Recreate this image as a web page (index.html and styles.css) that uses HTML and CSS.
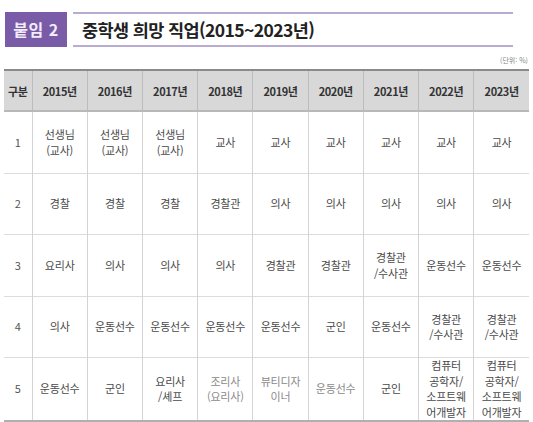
FILE: index.html
```html
<!DOCTYPE html>
<html lang="ko">
<head>
<meta charset="utf-8">
<link rel="stylesheet" href="styles.css">
</head>
<body>
<div class="page">
  <div class="title-row">
    <div class="badge">붙임 2</div>
    <div class="title">중학생 희망 직업(2015~2023년)</div>
  </div>
  <div class="unit">(단위: %)</div>
  <table class="grid">
    <colgroup>
      <col class="c0"><col class="cy"><col class="cy"><col class="cy"><col class="cy"><col class="cy"><col class="cy"><col class="cy"><col class="cy"><col class="cy">
    </colgroup>
    <thead>
      <tr>
        <th>구분</th><th>2015년</th><th>2016년</th><th>2017년</th><th>2018년</th><th>2019년</th><th>2020년</th><th>2021년</th><th>2022년</th><th>2023년</th>
      </tr>
    </thead>
    <tbody>
      <tr class="r1">
        <td class="rank">1</td><td>선생님<br>(교사)</td><td>선생님<br>(교사)</td><td>선생님<br>(교사)</td><td>교사</td><td>교사</td><td>교사</td><td>교사</td><td>교사</td><td>교사</td>
      </tr>
      <tr class="r2">
        <td class="rank">2</td><td>경찰</td><td>경찰</td><td>경찰</td><td>경찰관</td><td>의사</td><td>의사</td><td>의사</td><td>의사</td><td>의사</td>
      </tr>
      <tr class="r3">
        <td class="rank">3</td><td>요리사</td><td>의사</td><td>의사</td><td>의사</td><td>경찰관</td><td>경찰관</td><td>경찰관<br>/수사관</td><td>운동선수</td><td>운동선수</td>
      </tr>
      <tr class="r4">
        <td class="rank">4</td><td>의사</td><td>운동선수</td><td>운동선수</td><td>운동선수</td><td>운동선수</td><td>군인</td><td>운동선수</td><td>경찰관<br>/수사관</td><td>경찰관<br>/수사관</td>
      </tr>
      <tr class="r5">
        <td class="rank">5</td><td>운동선수</td><td>군인</td><td>요리사<br>/셰프</td><td class="faint">조리사<br>(요리사)</td><td class="faint">뷰티디자<br>이너</td><td class="faint">운동선수</td><td>군인</td><td>컴퓨터<br>공학자/<br>소프트웨<br>어개발자</td><td>컴퓨터<br>공학자/<br>소프트웨<br>어개발자</td>
      </tr>
    </tbody>
  </table>
</div>
</body>
</html>
```
FILE: styles.css
```css
html, body {
  margin: 0;
  padding: 0;
  background: #ffffff;
}
body {
  font-family: "Noto Sans CJK KR", "Noto Sans", sans-serif;
  color: #444;
}
.page {
  width: 533px;
  height: 422px;
  overflow: hidden;
  padding: 12px 0 0 4px;
  box-sizing: border-box;
}
.title-row {
  display: flex;
  align-items: stretch;
  height: 35px;
  margin-left: 1px;
}
.badge {
  width: 62px;
  background: #7a5ba8;
  color: #f1ecfa;
  font-weight: 700;
  font-size: 16px;
  letter-spacing: 0.5px;
  display: flex;
  align-items: center;
  justify-content: center;
  box-sizing: border-box;
  padding-bottom: 1px;
}
.title {
  margin-left: 6px;
  width: 440px;
  border-top: 2px solid #b9acd3;
  border-bottom: 2px solid #b9acd3;
  box-sizing: border-box;
  display: flex;
  align-items: center;
  padding-left: 9px;
  font-size: 17.5px;
  font-weight: 700;
  color: #222;
  letter-spacing: -0.6px;
}
.unit {
  text-align: right;
  font-size: 7px;
  color: #888;
  height: 10px;
  line-height: 10px;
  margin-top: 8px;
  padding-right: 5px;
  margin-bottom: 4px;
}
.grid {
  border-collapse: collapse;
  table-layout: fixed;
  width: 525px;
}
.c0 { width: 28px; }
.cy { width: 55px; }
.grid th {
  background: #d8d8d8;
  height: 39px;
  font-size: 11px;
  font-weight: 700;
  color: #333;
  letter-spacing: -0.4px;
  border-top: 2px solid #8a8a8a;
  border-bottom: 2px solid #b8b8b8;
  border-left: 1px solid #bcbcbc;
  padding: 0;
  text-align: center;
}
.grid th:first-child { border-left: none; }
.grid td {
  font-size: 11px;
  line-height: 15.5px;
  color: #4a4a4a;
  text-align: center;
  padding: 0;
  border-left: 1px solid #d4d4d4;
  border-top: 1px solid #dcdcdc;
  letter-spacing: -0.2px;
}
.grid td:first-child { border-left: none; }
.grid td.rank { color: #555; font-size: 11px; }
.grid td.faint { color: #8a8a8a; }
.r1 td { height: 61px; }
.r2 td { height: 60px; }
.r3 td { height: 61px; }
.r4 td { height: 60px; }
.r5 td { height: 62px; border-bottom: 2px solid #b0b0b0; }
```
